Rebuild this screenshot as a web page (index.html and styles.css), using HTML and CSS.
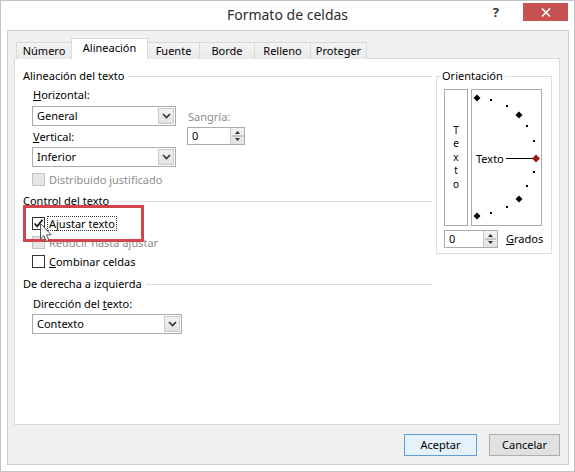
FILE: index.html
```html
<!DOCTYPE html>
<html lang="es">
<head>
<meta charset="utf-8">
<title>Formato de celdas</title>
<link rel="stylesheet" href="styles.css">
</head>
<body>
<div class="window">
  <div class="titlebar">
    <div></div>
    <div class="title">Formato de celdas</div>
    <div class="controls">
      <span class="help">?</span>
      <span class="close"><svg width="10" height="9" viewBox="0 0 10 9"><path d="M1 0.5 L9 8.5 M9 0.5 L1 8.5" stroke="#fff" stroke-width="1.6"/></svg></span>
    </div>
  </div>
  <div class="frame">
    <div class="body">
      <div class="tabs">
        <div class="tab t1">Número</div>
        <div class="tab t2 active">Alineación</div>
        <div class="tab t3">Fuente</div>
        <div class="tab t4">Borde</div>
        <div class="tab t5">Relleno</div>
        <div class="tab t6">Proteger</div>
      </div>
      <div class="panel">
        <div class="left">
          <div class="group-head first"><span>Alineación del texto</span><i class="rule"></i></div>
          <div class="align-block">
            <div class="align-col">
              <div class="lbl lbl-h"><u>H</u>orizontal:</div>
              <div class="select"><span class="val">General</span><span class="drop"><svg width="9" height="6" viewBox="0 0 9 6"><path d="M1 1 L4.5 4.5 L8 1" fill="none" stroke="#333" stroke-width="1.6"/></svg></span></div>
              <div class="lbl lbl-v"><u>V</u>ertical:</div>
              <div class="select"><span class="val">Inferior</span><span class="drop"><svg width="9" height="6" viewBox="0 0 9 6"><path d="M1 1 L4.5 4.5 L8 1" fill="none" stroke="#333" stroke-width="1.6"/></svg></span></div>
            </div>
            <div class="indent-col">
              <div class="lbl disabled lbl-s">Sangría:</div>
              <div class="spin spin-s"><span class="val">0</span><span class="spin-btns"><svg width="11" height="16" viewBox="0 0 11 16"><path d="M3 6 L5.5 3 L8 6 Z M3 10 L5.5 13 L8 10 Z" fill="#333"/><path d="M0 8 H11" stroke="#a0a0a0" stroke-width="1"/></svg></span></div>
            </div>
          </div>
          <div class="check-row dist disabled"><span class="box"></span><span>Distribuido justificado</span></div>

          <div class="group-head sec"><span>Control del texto</span><i class="rule"></i></div>
          <div class="checks">
            <div class="check-row"><span class="box checked"><svg width="11" height="11" viewBox="0 0 11 11"><path d="M1.5 5.5 L4.2 8.3 L9.5 1.8" fill="none" stroke="#1a1a1a" stroke-width="1.8"/></svg></span><span class="focus">Ajustar texto</span></div>
            <div class="check-row disabled"><span class="box"></span><span>Reducir hasta ajustar</span></div>
            <div class="check-row"><span class="box"></span><span><u>C</u>ombinar celdas</span></div>
          </div>

          <div class="group-head sec"><span>De derecha a izquierda</span><i class="rule"></i></div>
          <div class="lbl lbl-d">Dirección del <u>t</u>exto:</div>
          <div class="select sel-d"><span class="val">Contexto</span><span class="drop"><svg width="9" height="6" viewBox="0 0 9 6"><path d="M1 1 L4.5 4.5 L8 1" fill="none" stroke="#333" stroke-width="1.6"/></svg></span></div>

          <div class="highlight"></div>
          <svg class="cursor" width="13" height="20" viewBox="0 0 13 20"><path d="M0.5 0.5 L0.5 16 L4 12.6 L6.6 18.5 L9 17.4 L6.5 11.8 L11.2 11.8 Z" fill="#fff" stroke="#555" stroke-width="1"/></svg>
        </div>

        <fieldset class="orient">
          <legend>Orientación</legend>
          <div class="orient-row">
            <div class="vbox"><span>T</span><span>e</span><span>x</span><span>t</span><span>o</span></div>
            <div class="dial">
              <svg width="69" height="135" viewBox="0 0 69 135">
                <g fill="#000">
                  <path d="M5 4.5 L8.5 8 L5 11.5 L1.5 8 Z"/>
                  <path d="M47 21.5 L50.5 25 L47 28.5 L43.5 25 Z"/>
                  <path d="M47 105.5 L50.5 109 L47 112.5 L43.5 109 Z"/>
                  <path d="M5 122.5 L8.5 126 L5 129.5 L1.5 126 Z"/>
                  <rect x="18" y="9" width="2" height="2"/>
                  <rect x="34" y="15" width="2" height="2"/>
                  <rect x="54" y="35" width="2" height="2"/>
                  <rect x="61" y="50" width="2" height="2"/>
                  <rect x="61" y="81" width="2" height="2"/>
                  <rect x="54" y="95" width="2" height="2"/>
                  <rect x="34" y="116" width="2" height="2"/>
                  <rect x="18" y="122" width="2" height="2"/>
                </g>
                <path d="M34 68.5 H61" stroke="#000" stroke-width="1"/>
                <path d="M64 64.5 L68 68.5 L64 72.5 L60 68.5 Z" fill="#a31515"/>
                <text x="4" y="72.5" class="dial-text">Texto</text>
              </svg>
            </div>
          </div>
          <div class="deg-row">
            <div class="spin spin-g"><span class="val">0</span><span class="spin-btns"><svg width="11" height="16" viewBox="0 0 11 16"><path d="M3 6 L5.5 3 L8 6 Z M3 10 L5.5 13 L8 10 Z" fill="#333"/><path d="M0 8 H11" stroke="#a0a0a0" stroke-width="1"/></svg></span></div>
            <span class="deg-label"><u>G</u>rados</span>
          </div>
        </fieldset>
      </div>
      <div class="buttons">
        <div class="btn default">Aceptar</div>
        <div class="btn cancel">Cancelar</div>
      </div>
    </div>
  </div>
</div>
</body>
</html>
```

FILE: styles.css
```css
* { box-sizing: border-box; }
body {
  margin: 0;
  background: #fff;
  font-family: "Noto Sans", "Open Sans", sans-serif;
  font-size: 11px;
  color: #000;
}
.window {
  width: 575px;
  height: 472px;
  border: 1px solid #c4c4c4;
  background: #fff;
  display: flex;
  flex-direction: column;
}
.titlebar {
  height: 29px;
  display: grid;
  grid-template-columns: 1fr auto 1fr;
}
.title {
  font-size: 14px;
  color: #2b2b2b;
  padding-top: 4px;
}
.controls {
  display: flex;
  justify-content: flex-end;
  align-items: flex-start;
  padding-right: 6px;
}
.help {
  font-weight: bold;
  font-size: 13px;
  color: #333;
  margin-top: 2px;
  margin-right: 24px;
}
.close {
  width: 45px;
  height: 18px;
  margin-top: 2px;
  background: #c75050;
  display: flex;
  align-items: center;
  justify-content: center;
}
.frame {
  flex: 1;
  padding: 0 5px 6px 6px;
  display: flex;
}
.body {
  flex: 1;
  background: #f0f0f0;
  border: 1px solid #cfcfcf;
  padding: 7px 8px 8px 6px;
  display: flex;
  flex-direction: column;
}
.tabs {
  display: flex;
  align-items: flex-end;
  height: 21px;
  margin-left: 2px;
  margin-bottom: -1px;
  position: relative;
  z-index: 1;
}
.tab {
  height: 17px;
  line-height: 15px;
  border: 1px solid #d9d9d9;
  border-bottom: none;
  background: linear-gradient(#f3f3f3, #eaeaea);
  margin-right: -1px;
  text-align: center;
  color: #000;
}
.tab.active {
  height: 21px;
  line-height: 18px;
  background: #fff;
  position: relative;
  z-index: 2;
}
.t1 { width: 56px; }
.t2 { width: 77px; }
.t3 { width: 53px; }
.t4 { width: 56px; }
.t5 { width: 57px; }
.t6 { width: 57px; }
.panel {
  height: 367px;
  background: #fff;
  border: 1px solid #d9d9d9;
  display: flex;
  padding-left: 8px;
}
.left {
  width: 409px;
  position: relative;
}
.group-head {
  display: flex;
  align-items: center;
  height: 16px;
  line-height: 16px;
}
.group-head.first { margin-top: 9px; }
.group-head.sec { margin-top: 5px; }
.rule {
  flex: 1;
  height: 1px;
  background: #dcdcdc;
  margin-left: 4px;
}
.align-block {
  display: flex;
  margin-left: 9px;
}
.align-col { width: 144px; }
.lbl { padding-left: 1px; white-space: nowrap; }
.lbl-h { height: 22px; line-height: 22px; }
.lbl-v { height: 21px; line-height: 21px; }
.lbl-s { line-height: 16px; }
.disabled { color: #8d8d8d; }
.select {
  height: 20px;
  border: 1px solid #acacac;
  background: #fff;
  display: flex;
}
.val {
  padding-left: 4px;
  line-height: 18px;
  flex: 1;
}
.drop {
  width: 16px;
  margin: 1px;
  border: 1px solid #c9c9c9;
  background: linear-gradient(#f2f2f2, #e3e3e3);
  display: flex;
  align-items: center;
  justify-content: center;
}
.indent-col {
  margin-left: 11px;
  padding-top: 25px;
}
.spin {
  height: 18px;
  border: 1px solid #acacac;
  background: #fff;
  display: flex;
  margin-top: 2px;
}
.spin .val { line-height: 16px; }
.spin-s { width: 58px; }
.spin-btns {
  width: 14px;
  margin: 0;
  border-left: 1px solid #c9c9c9;
  background: linear-gradient(#f2f2f2, #e3e3e3);
  display: flex;
  align-items: center;
  justify-content: center;
}
.check-row {
  display: flex;
  align-items: center;
  height: 19px;
  gap: 4px;
  margin-left: 9px;
  white-space: nowrap;
}
.check-row.dist { margin-top: 3px; height: 18px; }
.box {
  width: 13px;
  height: 13px;
  border: 1px solid #333;
  background: #fff;
  display: flex;
  align-items: center;
  justify-content: center;
  flex: none;
}
.check-row.disabled .box {
  border-color: #c4c4c4;
  background: #e6e6e6;
}
.checks { margin-top: 5px; }
.focus {
  margin-left: -2px;
  border: 1px dotted #333;
  padding: 0 1px;
  line-height: 13px;
}
.lbl-d {
  margin-top: 4px;
  margin-left: 9px;
  line-height: 16px;
}
.sel-d {
  width: 150px;
  margin-left: 9px;
  margin-top: 2px;
}
.highlight {
  position: absolute;
  left: 0;
  top: 146px;
  width: 121px;
  height: 37px;
  border: 3px solid #d4454b;
}
.cursor {
  position: absolute;
  left: 17px;
  top: 164px;
}
.orient {
  margin: 9px 0 0 4px;
  width: 116px;
  height: 186px;
  border: 1px solid #dcdcdc;
  padding: 5px 7px 0 7px;
  min-width: 0;
}
.orient legend {
  padding: 0 2px;
  margin-left: -4px;
  line-height: 16px;
}
.orient-row {
  display: flex;
  gap: 3px;
  height: 137px;
}
.vbox {
  width: 24px;
  border: 1px solid #a9a9a9;
  display: flex;
  flex-direction: column;
  align-items: center;
  justify-content: center;
  font-size: 10px;
}
.vbox span {
  display: block;
  height: 13.4px;
  line-height: 13.4px;
}
.dial {
  width: 71px;
  border: 1px solid #a9a9a9;
}
.dial svg { display: block; }
.dial-text {
  font-family: "Noto Sans", "Open Sans", sans-serif;
  font-size: 11px;
  fill: #000;
}
.deg-row {
  display: flex;
  align-items: center;
  margin-top: 2px;
}
.spin-g { width: 54px; }
.deg-label { margin-left: 8px; }
.buttons {
  display: flex;
  justify-content: flex-end;
  gap: 12px;
  margin-top: 9px;
}
.btn {
  height: 22px;
  line-height: 20px;
  text-align: center;
  border: 1px solid #adadad;
  background: #e1e1e1;
}
.btn.default {
  width: 73px;
  border-color: #5f9fd9;
  background: #e5f1fb;
}
.btn.cancel { width: 71px; }
```
